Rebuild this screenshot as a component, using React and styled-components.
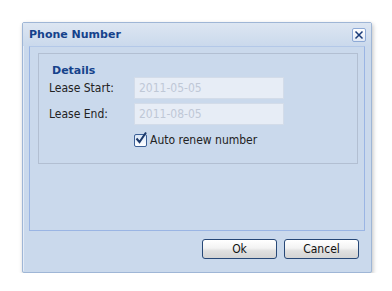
import React from "react";
import styled, { createGlobalStyle } from "styled-components";

const Global = createGlobalStyle`
  html, body { margin: 0; padding: 0; background: #ffffff; }
  body { font-family: "DejaVu Sans Condensed", "DejaVu Sans", Tahoma, sans-serif; }
`;

const Page = styled.div`
  padding: 22px 0 0 22px;
`;

const Window = styled.div`
  box-sizing: border-box;
  width: 350px;
  height: 251px;
  border: 1px solid #9fb6d6;
  border-radius: 2px;
  background: #cad9ec;
  box-shadow: 1px 2px 4px rgba(0, 0, 0, 0.25), inset 1px 1px 0 #e4ecf7;
  display: flex;
  flex-direction: column;
`;

const Header = styled.div`
  box-sizing: border-box;
  height: 23px;
  display: flex;
  align-items: center;
  justify-content: space-between;
  padding: 0 5px 0 6px;
  background: linear-gradient(#dde6f2, #cad9ec);
`;

const Title = styled.span`
  font-family: Tahoma, "DejaVu Sans", sans-serif;
  font-size: 11px;
  font-weight: bold;
  color: #15428b;
`;

const CloseBtn = styled.div`
  width: 12px;
  height: 12px;
  border: 1px solid #8eaad6;
  border-radius: 2px;
  background: linear-gradient(#ffffff, #e1e9f5);
  display: flex;
  align-items: center;
  justify-content: center;
`;

const BodyFrame = styled.div`
  box-sizing: border-box;
  margin: 0 6px 0 6px;
  height: 185px;
  border: 1px solid #9ab5e4;
  border-top-color: #b3c8e8;
  padding: 6px 6px 0 8px;
`;

const Fieldset = styled.div`
  box-sizing: border-box;
  height: 111px;
  border: 1px solid #b2bfd2;
  padding: 11px 10px 0 10px;
  display: flex;
  flex-direction: column;
`;

const Legend = styled.div`
  font-family: Tahoma, "DejaVu Sans", sans-serif;
  font-size: 11px;
  font-weight: bold;
  color: #15428b;
  padding-left: 3px;
  height: 12px;
  line-height: 12px;
`;

const Row = styled.div`
  display: flex;
  align-items: center;
  margin-top: ${(p) => p.$top || 0}px;
`;

const Label = styled.span`
  width: 85px;
  font-size: 12px;
  color: #222;
`;

const Input = styled.div`
  box-sizing: border-box;
  width: 150px;
  height: 22px;
  border: 1px solid #d3dce9;
  background: #e7edf6;
  font-size: 12px;
  color: #bfc8d6;
  display: flex;
  align-items: center;
  padding-left: 4px;
`;

const CheckWrap = styled.label`
  display: flex;
  align-items: center;
  gap: 3px;
  margin-left: 85px;
  font-size: 12px;
  color: #222;
`;

const Box = styled.span`
  width: 11px;
  height: 11px;
  border: 1px solid #3b5f95;
  border-radius: 2px;
  background: linear-gradient(#d9e6f7, #ffffff);
  position: relative;
  display: inline-block;
`;

const Footer = styled.div`
  display: flex;
  justify-content: flex-end;
  gap: 7px;
  padding: 8px 12px 0 0;
`;

const Button = styled.button`
  box-sizing: border-box;
  width: 75px;
  height: 20px;
  border: 1px solid #274877;
  border-radius: 3px;
  background: linear-gradient(#ffffff 0%, #f3f3f3 45%, #e0e0e0 60%, #d4d4d4 100%);
  font-family: inherit;
  font-size: 12px;
  color: #111;
  padding: 0;
`;

export default function App() {
  return (
    <>
      <Global />
      <Page>
        <Window>
          <Header>
            <Title>Phone Number</Title>
            <CloseBtn>
              <svg width="10" height="10" viewBox="0 0 10 10">
                <path d="M1.5 1.5 L8.5 8.5 M8.5 1.5 L1.5 8.5" stroke="#1a3b78" strokeWidth="1.5" />
              </svg>
            </CloseBtn>
          </Header>
          <BodyFrame>
            <Fieldset>
              <Legend>Details</Legend>
              <Row $top={0}>
                <Label>Lease Start:</Label>
                <Input>2011-05-05</Input>
              </Row>
              <Row $top={4}>
                <Label>Lease End:</Label>
                <Input>2011-08-05</Input>
              </Row>
              <Row $top={8}>
                <CheckWrap>
                  <Box>
                    <svg width="14" height="14" viewBox="0 0 14 14" style={{ position: "absolute", left: -1, top: -4 }}>
                      <path d="M2.5 7.5 L5.5 11 L12 1.5" fill="none" stroke="#1d3a6b" strokeWidth="2" />
                    </svg>
                  </Box>
                  Auto renew number
                </CheckWrap>
              </Row>
            </Fieldset>
          </BodyFrame>
          <Footer>
            <Button>Ok</Button>
            <Button>Cancel</Button>
          </Footer>
        </Window>
      </Page>
    </>
  );
}
